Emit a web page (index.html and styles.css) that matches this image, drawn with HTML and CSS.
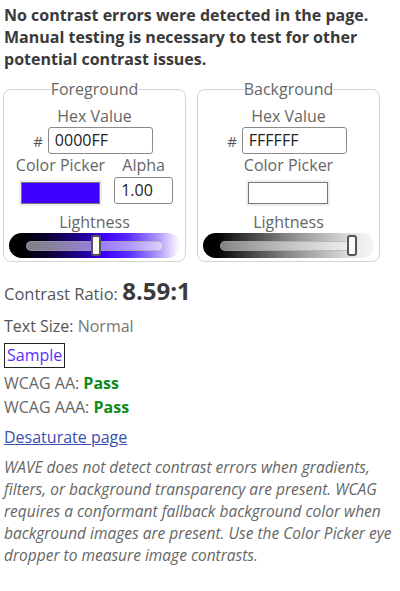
FILE: index.html
```html
<!DOCTYPE html>
<html>
<head>
<meta charset="utf-8">
<link rel="stylesheet" href="styles.css">
</head>
<body>
<p class="heading">No contrast errors were detected in the page. Manual testing is necessary to test for other potential contrast issues.</p>
<div class="panels">
  <fieldset class="panel">
    <legend>Foreground</legend>
    <div class="label">Hex Value</div>
    <div class="hexrow"><span class="hash">#</span><span class="input hex">0000FF</span></div>
    <div class="pickrow">
      <div class="col">
        <div class="label">Color Picker</div>
        <div class="swatch fg"></div>
      </div>
      <div class="col">
        <div class="label">Alpha</div>
        <span class="input alpha">1.00</span>
      </div>
    </div>
    <div class="label light-label">Lightness</div>
    <div class="slider fgslider">
      <div class="track"></div>
      <div class="thumb" style="left: 82px"></div>
    </div>
  </fieldset>
  <fieldset class="panel">
    <legend>Background</legend>
    <div class="label">Hex Value</div>
    <div class="hexrow"><span class="hash">#</span><span class="input hex">FFFFFF</span></div>
    <div class="pickrow">
      <div class="col">
        <div class="label">Color Picker</div>
        <div class="swatch bg"></div>
      </div>
    </div>
    <div class="label light-label">Lightness</div>
    <div class="slider bgslider">
      <div class="track"></div>
      <div class="thumb" style="left: 144px"></div>
    </div>
  </fieldset>
</div>
<div class="ratio">Contrast Ratio: <strong>8.59:1</strong></div>
<div class="size">Text Size: <span class="light">Normal</span></div>
<div class="sample">Sample</div>
<div class="wcag first">WCAG AA: <strong class="pass">Pass</strong></div>
<div class="wcag">WCAG AAA: <strong class="pass">Pass</strong></div>
<div class="desat-row"><a class="desat" href="#">Desaturate page</a></div>
<p class="note">WAVE does not detect contrast errors when gradients, filters, or background transparency are present. WCAG requires a conformant fallback background color when background images are present. Use the Color Picker eye dropper to measure image contrasts.</p>
</body>
</html>
```

FILE: styles.css
```css
html, body { background: #fff; }
body {
  margin: 0;
  padding: 4px;
  font-family: "Open Sans", sans-serif;
  font-size: 16px;
  color: #555;
  line-height: 22px;
}
.heading {
  margin: 0;
  font-weight: 700;
  font-size: 16px;
  color: #3a3a3a;
  line-height: 22px;
}
.panels {
  display: flex;
  gap: 11px;
  margin-top: 8px;
  margin-left: -1px;
}
.panel {
  width: 183px;
  box-sizing: border-box;
  margin: 0;
  padding: 5px 4px 3px;
  border: 1px solid #d4d4d4;
  border-radius: 8px;
  text-align: center;
  min-width: 0;
}
.panel legend {
  margin: 0 auto;
  padding: 0;
  font-size: 16px;
  line-height: 22px;
  color: #666;
}
.label {
  font-size: 16px;
  line-height: 22px;
  color: #666;
}
.hexrow {
  display: flex;
  justify-content: center;
  align-items: center;
  gap: 5px;
  margin-left: -3px;
}
.hash { font-size: 15px; color: #555; }
.input {
  display: inline-block;
  box-sizing: border-box;
  border: 1px solid #8a8a8a;
  border-radius: 3px;
  font-size: 16px;
  color: #222;
  text-align: left;
  padding: 0 6px;
}
.hex { width: 105px; height: 27px; line-height: 25px; }
.alpha { width: 59px; height: 27px; line-height: 25px; margin-top: 1px; }
.pickrow {
  display: flex;
  justify-content: center;
  gap: 9px;
}
.col {
  display: flex;
  flex-direction: column;
  align-items: center;
}
.swatch {
  width: 79px;
  height: 22px;
  box-sizing: border-box;
  margin-top: 6px;
  border: 1px solid #777;
  box-shadow: 0 0 0 2px #eee;
}
.swatch.fg { background: #3f00ff; }
.swatch.bg { background: #fff; width: 80px; }
.light-label { margin-top: 7px; }
.slider {
  position: relative;
  height: 25px;
  margin: 0 1px;
  border-radius: 13px;
  display: flex;
  align-items: center;
  padding: 0 17px;
}
.fgslider {
  background: linear-gradient(to right, #000 0%, #000 7%, #0a0030 22%, #2500a0 45%, #3f00ff 56%, #5a2dff 70%, #a890ff 86%, #fff 100%);
}
.bgslider {
  background: linear-gradient(to right, #000 0%, #000 8%, #3a3a3a 25%, #888 50%, #c4c4c4 75%, #eee 92%, #f4f4f4 100%);
}
.track {
  flex: 1;
  height: 8px;
  border-radius: 5px;
  background: rgba(255,255,255,0.5);
  border: 1px solid rgba(160,160,160,0.6);
}
.thumb {
  position: absolute;
  top: 2px;
  width: 10px;
  height: 21px;
  box-sizing: border-box;
  background: #fafafa;
  border: 2px solid #555;
  border-radius: 3px;
}
.ratio {
  margin-top: 14px;
  font-size: 16.5px;
  line-height: 30px;
}
.ratio strong {
  font-size: 24px;
  color: #3a3a3a;
}
.size {
  margin-top: 6px;
  font-size: 16px;
  line-height: 22px;
}
.light { color: #777; }
.sample {
  display: inline-block;
  margin-top: 6px;
  border: 1px solid #222;
  padding: 0 2px;
  color: #5a2dff;
  font-size: 16px;
  line-height: 23px;
}
.wcag {
  font-size: 16px;
  line-height: 24px;
  color: #666;
}
.wcag.first { margin-top: 3px; }
.pass { color: #118a1d; }
.desat-row {
  margin-top: 7px;
  line-height: 22px;
}
.desat {
  color: #3a4fb0;
  font-size: 16px;
}
.note {
  margin: 8px -4px 0 0;
  font-style: italic;
  font-size: 15.5px;
  line-height: 22px;
  color: #666;
}
```
